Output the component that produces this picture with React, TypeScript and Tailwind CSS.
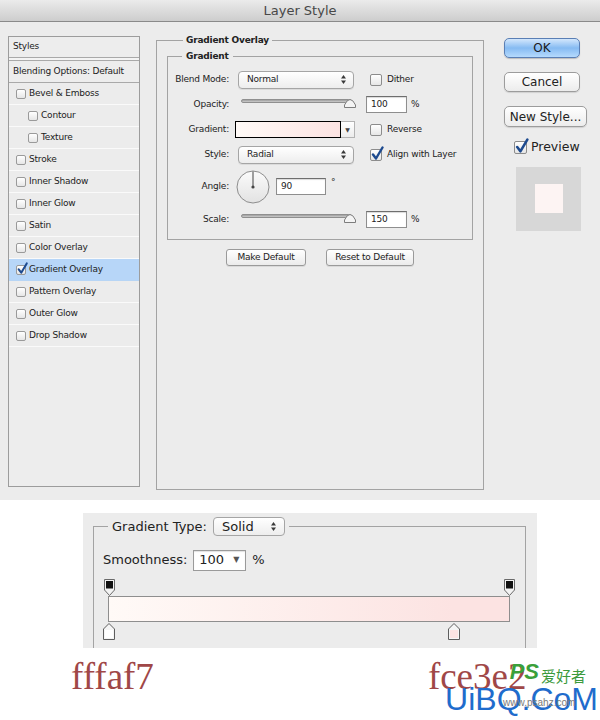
import React from "react";

const Arrows = () => (
  <svg width="5" height="9" viewBox="0 0 5 9">
    <polygon points="0,3.6 2.5,0 5,3.6" fill="#3a3a3a" />
    <polygon points="0,5.4 2.5,9 5,5.4" fill="#3a3a3a" />
  </svg>
);

const Check = ({ size = 11 }: { size?: number }) => (
  <svg
    width={size + 1}
    height={size + 3}
    viewBox="0 0 13 15"
    className="absolute left-[0px] top-[-4px]"
  >
    <path d="M2 8.5 L5 12.5 L11.5 1.5" fill="none" stroke="#1d4a8f" strokeWidth="2.4" strokeLinecap="round" strokeLinejoin="round" />
  </svg>
);

const Checkbox = ({ checked = false, small = false }: { checked?: boolean; small?: boolean }) => (
  <div
    className={
      small
        ? "relative h-[10px] w-[10px] shrink-0 rounded-[2px] border border-[#9a9a9a] bg-gradient-to-b from-white to-[#e6e6e6]"
        : "relative h-[12px] w-[12px] shrink-0 rounded-[2px] border border-[#8c8c8c] bg-gradient-to-b from-white to-[#e6e6e6]"
    }
  >
    {checked && <Check size={small ? 10 : 12} />}
  </div>
);

const Select = ({ value, w }: { value: string; w: string }) => (
  <div
    className={`flex h-[18px] ${w} items-center justify-between rounded-[4px] border border-[#a5a5a5] bg-gradient-to-b from-white to-[#ededed] pl-[8px] pr-[7px] shadow-[0_1px_0_rgba(0,0,0,0.07)]`}
  >
    <span>{value}</span>
    <Arrows />
  </div>
);

const Slider = () => (
  <div className="relative h-[12px] w-[113px]">
    <div className="absolute left-0 right-[2px] top-[2px] h-[4px] rounded-full border border-[#8f8f8f] bg-gradient-to-b from-[#9d9d9d] to-[#cdcdcd]" />
    <svg width="12" height="9" viewBox="0 0 12 9" className="absolute right-[-2px] top-[2px]">
      <path d="M0.5 8.5 L0.5 6 Q3 0.5 6 0.5 Q9 0.5 11.5 6 L11.5 8.5 Z" fill="#f4f4f4" stroke="#7d7d7d" />
    </svg>
  </div>
);

const NumInput = ({ v, w = "w-[41px]" }: { v: string; w?: string }) => (
  <div className={`flex h-[17px] ${w} items-center border border-[#8e8e8e] border-t-[#6e6e6e] bg-white pl-[4px] shadow-[inset_0_1px_1px_rgba(0,0,0,0.15)]`}>
    {v}
  </div>
);

const styleRows: { label: string; sub?: boolean; checked?: boolean; sel?: boolean }[] = [
  { label: "Bevel & Emboss" },
  { label: "Contour", sub: true },
  { label: "Texture", sub: true },
  { label: "Stroke" },
  { label: "Inner Shadow" },
  { label: "Inner Glow" },
  { label: "Satin" },
  { label: "Color Overlay" },
  { label: "Gradient Overlay", checked: true, sel: true },
  { label: "Pattern Overlay" },
  { label: "Outer Glow" },
  { label: "Drop Shadow" },
];

const TopStop = () => (
  <svg width="11" height="17" viewBox="0 0 11 17">
    <path d="M0.5 0.5 H10.5 V11 L5.5 16.5 L0.5 11 Z" fill="#f3f3f3" stroke="#6a6a6a" />
    <rect x="2" y="2" width="7" height="7.5" fill="#111" />
  </svg>
);

const BottomStop = ({ fill }: { fill: string }) => (
  <svg width="12" height="17" viewBox="0 0 12 17">
    <path d="M0.5 6 L6 0.5 L11.5 6 V16.5 H0.5 Z" fill="#f5f5f5" stroke="#5e5e5e" />
    <rect x="2" y="7" width="8" height="8" fill={fill} />
  </svg>
);

export default function App() {
  return (
    <div className="relative h-[720px] w-[600px] overflow-hidden bg-white font-['DejaVu_Sans',sans-serif] text-[#222]">
      {/* Title bar */}
      <div className="flex h-[22px] items-center justify-center border-b border-[#8a8a8a] bg-gradient-to-b from-[#ebebeb] to-[#cdcdcd] text-[13px] text-[#484848]">
        Layer Style
      </div>

      {/* Dialog body */}
      <div className="flex h-[478px] items-start bg-[#ececec] pl-[8px] pt-[12px] text-[9px] tracking-[-0.2px]">
        {/* Left styles list */}
        <div className="mt-[2px] flex h-[451px] w-[132px] flex-col border border-[#9c9c9c] bg-[#ededed]">
          <div className="flex h-[21px] items-center border-b border-[#a9a9a9] pl-[4px]">Styles</div>
          <div className="h-[3px] border-b border-[#a9a9a9] bg-[#f4f4f4]" />
          <div className="flex h-[22px] items-center border-b border-[#a9a9a9] pl-[4px]">Blending Options: Default</div>
          {styleRows.map((r) => (
            <div
              key={r.label}
              className={`flex h-[22px] items-center gap-[3px] border-b ${
                r.sel ? "border-[#b7d5f5] bg-[#b7d6f8]" : "border-[#fafafa] bg-[#ececec]"
              } ${r.sub ? "pl-[19px]" : "pl-[7px]"}`}
            >
              <Checkbox small checked={r.checked} />
              <span>{r.label}</span>
            </div>
          ))}
        </div>

        {/* Middle panel */}
        <fieldset className="ml-[16px] h-[456px] w-[328px] border border-[#a3a3a3] px-[10px] pt-[2px]">
          <legend className="ml-[16px] px-[3px] font-bold">Gradient Overlay</legend>
          <fieldset className="border border-[#a3a3a3] pb-[6px] pt-[4px]">
            <legend className="ml-[14px] px-[4px] font-bold">Gradient</legend>
            {/* Blend Mode */}
            <div className="flex h-[25px] items-center">
              <div className="w-[62px] pr-[1px] text-right">Blend Mode:</div>
              <div className="ml-[8px] w-[124px]">
                <Select value="Normal" w="w-[116px]" />
              </div>
              <div className="ml-[8px] flex items-center gap-[5px]">
                <Checkbox />
                <span>Dither</span>
              </div>
            </div>
            {/* Opacity */}
            <div className="flex h-[25px] items-center">
              <div className="w-[62px] pr-[1px] text-right">Opacity:</div>
              <div className="ml-[11px] w-[121px] pb-[4px]">
                <Slider />
              </div>
              <div className="ml-[4px] flex items-center gap-[4px]">
                <NumInput v="100" />
                <span>%</span>
              </div>
            </div>
            {/* Gradient */}
            <div className="flex h-[25px] items-center">
              <div className="w-[62px] pr-[1px] text-right">Gradient:</div>
              <div className="ml-[5px] flex w-[127px] items-center">
                <div className="h-[17px] w-[106px] border border-black bg-gradient-to-r from-[#fffaf7] to-[#fce3e2]" />
                <div className="flex h-[17px] w-[14px] items-center justify-center border border-l-0 border-[#b3b3b3] bg-gradient-to-b from-white to-[#ececec] text-[6px] text-[#444]">
                  ▼
                </div>
              </div>
              <div className="ml-[8px] flex items-center gap-[5px]">
                <Checkbox />
                <span>Reverse</span>
              </div>
            </div>
            {/* Style */}
            <div className="flex h-[25px] items-center">
              <div className="w-[62px] pr-[1px] text-right">Style:</div>
              <div className="ml-[8px] w-[124px]">
                <Select value="Radial" w="w-[116px]" />
              </div>
              <div className="ml-[8px] flex items-center gap-[5px]">
                <Checkbox checked />
                <span>Align with Layer</span>
              </div>
            </div>
            {/* Angle */}
            <div className="flex h-[39px] items-center">
              <div className="w-[62px] pr-[1px] text-right">Angle:</div>
              <div className="ml-[6px] flex items-center">
                <svg width="34" height="34" viewBox="0 0 34 34">
                  <defs>
                    <linearGradient id="dial" x1="0" y1="0" x2="0" y2="1">
                      <stop offset="0" stopColor="#fbfbfb" />
                      <stop offset="1" stopColor="#e2e2e2" />
                    </linearGradient>
                  </defs>
                  <circle cx="17" cy="17" r="16" fill="url(#dial)" stroke="#8d8d8d" />
                  <line x1="17" y1="17" x2="17" y2="1.5" stroke="#444" strokeWidth="1" />
                  <circle cx="17" cy="17" r="1.6" fill="#444" />
                </svg>
                <div className="ml-[6px]">
                  <NumInput v="90" w="w-[50px]" />
                </div>
                <span className="ml-[5px] self-start pt-[6px]">°</span>
              </div>
            </div>
            {/* Scale */}
            <div className="flex h-[27px] items-center">
              <div className="w-[62px] pr-[1px] text-right">Scale:</div>
              <div className="ml-[11px] w-[121px] pb-[4px]">
                <Slider />
              </div>
              <div className="ml-[4px] flex items-center gap-[4px]">
                <NumInput v="150" />
                <span>%</span>
              </div>
            </div>
          </fieldset>
          <div className="mt-[9px] flex justify-center gap-[20px]">
            <div className="flex h-[17px] w-[80px] items-center justify-center rounded-[3px] border border-[#9a9a9a] bg-gradient-to-b from-white to-[#ebebeb] shadow-[0_1px_0_rgba(0,0,0,0.08)]">
              Make Default
            </div>
            <div className="flex h-[17px] w-[88px] items-center justify-center rounded-[3px] border border-[#9a9a9a] bg-gradient-to-b from-white to-[#ebebeb] shadow-[0_1px_0_rgba(0,0,0,0.08)]">
              Reset to Default
            </div>
          </div>
        </fieldset>

        {/* Right column */}
        <div className="ml-[20px] mt-[4px] flex flex-col text-[12px] tracking-normal">
          <div className="flex h-[20px] w-[76px] items-center justify-center rounded-[5px] border border-[#5a7fb5] bg-gradient-to-b from-[#d3e7fc] via-[#86bbf2] to-[#b5dafd] text-[#1b1b1b] shadow-[0_1px_1px_rgba(0,0,0,0.2)]">
            OK
          </div>
          <div className="mt-[14px] flex h-[20px] w-[76px] items-center justify-center rounded-[5px] border border-[#9c9c9c] bg-gradient-to-b from-white to-[#ececec] shadow-[0_1px_1px_rgba(0,0,0,0.12)]">
            Cancel
          </div>
          <div className="mt-[14px] flex h-[21px] w-[83px] items-center justify-center rounded-[5px] border border-[#9c9c9c] bg-gradient-to-b from-white to-[#ececec] shadow-[0_1px_1px_rgba(0,0,0,0.12)]">
            New Style...
          </div>
          <div className="ml-[10px] mt-[11px] flex items-center gap-[4px] text-[12.5px]">
            <div className="relative h-[13px] w-[13px] rounded-[2px] border border-[#8c8c8c] bg-gradient-to-b from-white to-[#e6e6e6]">
              <Check size={13} />
            </div>
            <span>Preview</span>
          </div>
          <div className="ml-[12px] mt-[10px] flex h-[64px] w-[65px] items-center justify-center bg-[#d7d7d7]">
            <div className="h-[29px] w-[28px] bg-[#fdf4f3]" />
          </div>
        </div>
      </div>

      {/* Gradient editor crop */}
      <div className="ml-[83px] mt-[13px] h-[135px] w-[454px] overflow-hidden bg-[#ececec] pt-[4px] text-[13px]">
        <fieldset className="ml-[10px] w-[433px] border border-b-0 border-[#a3a3a3] pb-[20px]">
          <legend className="ml-[14px] flex items-center gap-[6px] px-[4px]">
            <span>Gradient Type:</span>
            <div className="flex h-[19px] w-[72px] items-center justify-between rounded-[4px] border border-[#a5a5a5] bg-gradient-to-b from-white to-[#ededed] pl-[8px] pr-[8px]">
              <span>Solid</span>
              <Arrows />
            </div>
          </legend>
          <div className="ml-[9px] mt-[13px] flex items-center">
            <span>Smoothness:</span>
            <div className="ml-[6px] flex h-[21px] w-[53px] items-center justify-between border border-[#9a9a9a] bg-white pl-[5px] pr-[6px] shadow-[inset_0_1px_1px_rgba(0,0,0,0.12)]">
              <span>100</span>
              <span className="text-[8px] text-[#555]">▼</span>
            </div>
            <span className="ml-[6px]">%</span>
          </div>
          <div className="relative ml-[14px] mt-[8px] h-[62px] w-[402px]">
            <div className="absolute left-[-4px] top-0">
              <TopStop />
            </div>
            <div className="absolute right-[-5px] top-0">
              <TopStop />
            </div>
            <div className="absolute left-0 top-[17px] h-[26px] w-[402px] border border-[#8e8e8e] bg-[linear-gradient(to_right,#fffaf7_0%,#fce3e2_86%)]" />
            <div className="absolute left-[-5px] top-[44px]">
              <BottomStop fill="#ffffff" />
            </div>
            <div className="absolute left-[340px] top-[44px]">
              <BottomStop fill="#fce3e2" />
            </div>
          </div>
        </fieldset>
      </div>

      {/* Hex labels */}
      <div className="flex h-[47px] items-end font-['Liberation_Serif',serif] text-[37px] leading-none text-[#a04747]">
        <span className="ml-[71px]">fffaf7</span>
        <span className="ml-[274px]">fce3e2</span>
      </div>

      {/* Watermark */}
      <div className="absolute bottom-[3px] right-[2px] flex flex-col items-end">
        <div className="mr-[12px] flex items-end gap-[2px] leading-none">
          <span className="font-['Liberation_Sans',sans-serif] text-[22px] font-bold italic text-[#3aa03a]">PS</span>
          <span className="font-['Noto_Sans_CJK_SC',sans-serif] text-[15px] text-[#3c9a3c]">爱好者</span>
        </div>
        <div className="relative">
          <span className="font-['Liberation_Sans',sans-serif] text-[32px] leading-none text-[#1f6ccc]">UiBQ.CoM</span>
          <span className="absolute left-[58px] top-[12px] font-['Liberation_Sans',sans-serif] text-[10px] text-[#7a7a7a]">www.psahz.com</span>
        </div>
      </div>
    </div>
  );
}
